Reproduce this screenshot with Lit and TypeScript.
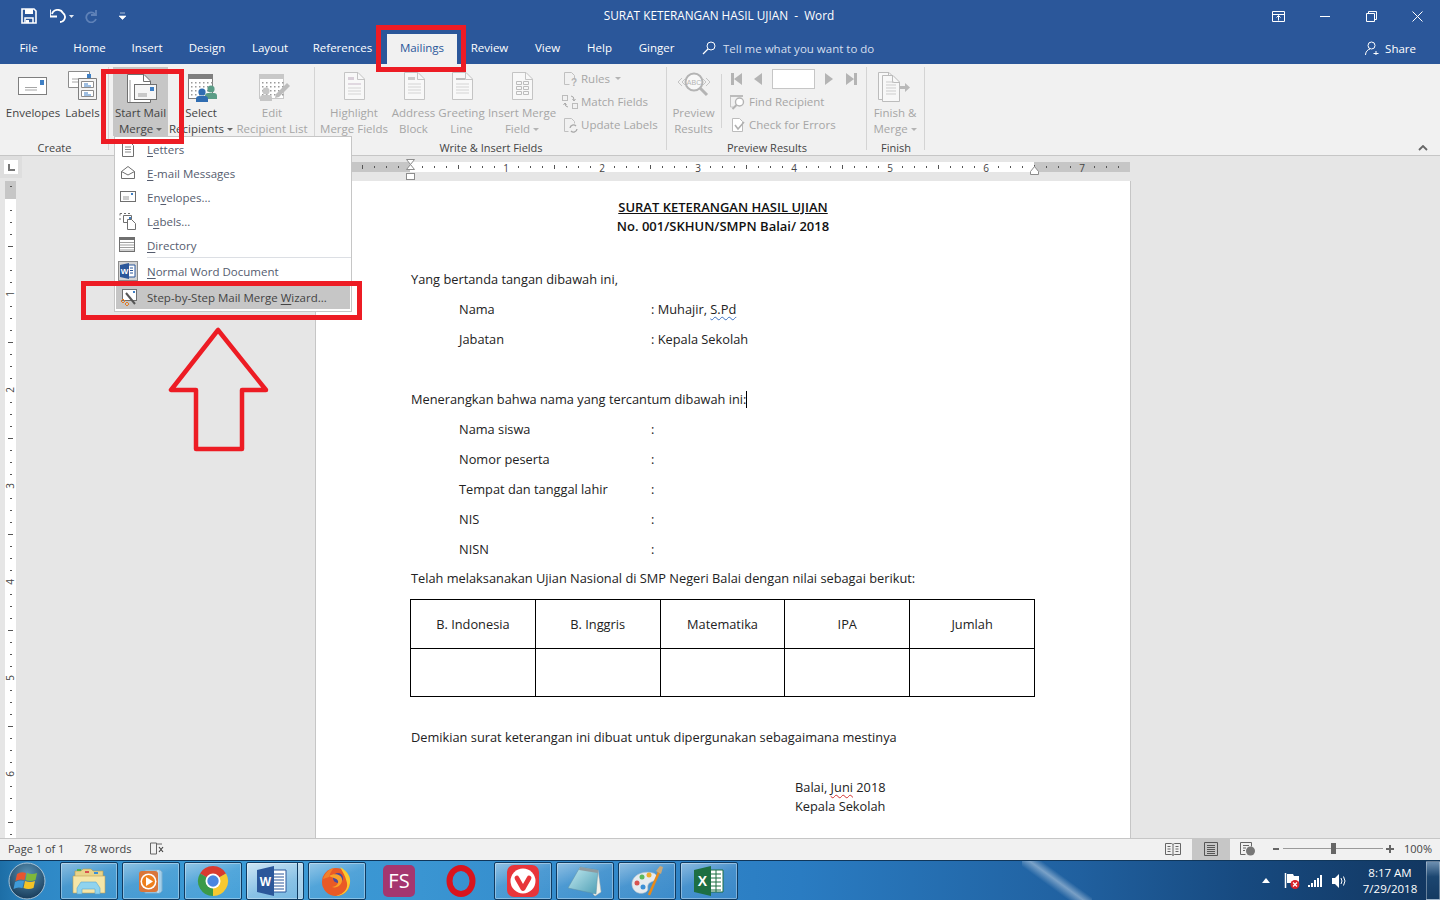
import { LitElement, html, css, svg } from 'lit';
import { customElement } from 'lit/decorators.js';

const range = (n: number) => Array.from({ length: n }, (_, i) => i);

// ---- ribbon icons (40x37 box, centred on the button column) ----
const G = '#c4c4c4';
const docSheet = (x: number, y: number, w: number, h: number, c = G, fill = '#f8f8f8') => svg`
  <path d="M${x + .5} ${y + .5}H${x + w - 7}L${x + w - .5} ${y + 7}V${y + h - .5}H${x + .5}Z" fill=${fill} stroke=${c}/>
  <path d="M${x + w - 7.5} ${y + 1}V${y + 7.5}H${x + w}" fill="none" stroke=${c}/>`;
const icon = (body: unknown) => html`<svg width="40" height="37" viewBox="0 0 40 37">${body}</svg>`;
const mini = (body: unknown) => html`<svg width="18" height="18" viewBox="0 0 18 18">${body}</svg>`;

const envelopeIcon = icon(svg`
  <rect x="5.5" y="10.5" width="28" height="17" fill="#fff" stroke="#7f7f7f"/>
  <rect x="27" y="13" width="4" height="5" fill="#3f7fc4"/>
  <path d="M12 20.5h12M12 23h12" stroke="#a6a6a6"/>`);
const labelsIcon = icon(svg`
  <path d="M5.5 4.5h21v16h-21z" fill="#fff" stroke="#8c8c8c"/>
  <rect x="24" y="7" width="4" height="5" fill="#3f7fc4"/>
  <path d="M9 12h10M9 15h10" stroke="#a6a6a6"/>
  <path d="M15.5 11.5h18v21h-18z" fill="#f4f4f4" stroke="#7f7f7f"/>
  <path d="M18.500 14.500h12v6h-12zM18.500 23.500h12v6h-12z" fill="#fff" stroke="#8c8c8c"/>
  <path d="M21 17h4M21 19h7M21 26h4M21 28h7" stroke="#3f7fc4"/>`);
const mergeIcon = icon(svg`
  ${docSheet(6, 7, 24, 29, '#707070', '#fff')}
  <path d="M9 13v22" stroke="#9b9b9b"/>
  <rect x="13.500" y="17.500" width="22" height="15" fill="#f6f6f6" stroke="#707070"/>
  <rect x="29" y="20" width="4" height="4" fill="#3f7fc4"/>
  <path d="M17 27h9M17 29h9" stroke="#9b9b9b"/>`);
const calendar = (c: string) => svg`
  <rect x="7.500" y="7.500" width="24" height="24" fill="#fff" stroke=${c}/>
  <rect x="7" y="7" width="25" height="5" fill=${c}/>
  ${range(4).map(r => range(6).map(k => svg`<rect x=${10 + k * 4} y=${15 + r * 4} width="1.500" height="1.500" fill="#999"/>`))}`;
const person = (x: number, y: number, c: string) => svg`
  <circle cx=${x} cy=${y} r="3.600" fill=${c}/>
  <path d="M${x - 6} ${y + 10}v-3q0-3 3-3h6q3 0 3 3v3z" fill=${c}/>`;
const selectIcon = icon(svg`${calendar('#7f7f7f')}${person(30, 22, '#5a9c86')}${person(21, 25, '#2f6db2')}`);
const editIcon = icon(svg`
  ${calendar('#c8c8c8')}${person(14, 24, '#c6c6c6')}
  <path d="M24 27l11-11 3 3-11 11-4 1z" fill="#bcbcbc"/>`);
const highlightIcon = icon(svg`
  ${docSheet(10, 5, 21, 28)}
  <rect x="14" y="10" width="6" height="3" fill="#d9cfd9"/><rect x="14" y="16" width="13" height="2" fill="#e0d8e0"/>
  <path d="M14 21h13M14 24h13M14 27h13" stroke="#d4d4d4"/>`);
const addressIcon = icon(svg`
  ${docSheet(10, 5, 21, 28)}
  <rect x="14" y="10" width="7" height="3" fill="#cbcbcb"/>
  <path d="M14 17h13M14 20h13M14 23h13M14 26h13" stroke="#d4d4d4"/>`);
const greetingIcon = icon(svg`
  ${docSheet(10, 5, 21, 28)}
  <rect x="14" y="11" width="9" height="2" fill="#bdbdbd"/>
  <path d="M14 17h13M14 20h13M14 23h13M14 26h13" stroke="#d4d4d4"/>`);
const insertIcon = icon(svg`
  ${docSheet(10, 5, 21, 28)}
  <path d="M14.500 14.500h5v3h-5zM21.500 14.500h5v3h-5zM14.500 19.500h5v3h-5zM21.500 19.500h5v3h-5zM14.500 24.500h5v3h-5zM21.500 24.500h5v3h-5z" fill="none" stroke="#bdbdbd"/>`);
const previewIcon = icon(svg`
  <circle cx="20" cy="15" r="8.500" fill="#f8f8f8" stroke="#b4b4b4" stroke-width="2"/>
  <path d="M26 21l7 7" stroke="#b4b4b4" stroke-width="3"/>
  <path d="M8 11l-4 4 4 4M12 11l-4 4 4 4M32 11l4 4-4 4M28 11l4 4-4 4" fill="none" stroke="#c4c4c4"/>
  <text x="20" y="18" text-anchor="middle" font-size="7" fill="#b4b4b4" font-family="Liberation Sans">ABC</text>`);
const finishIcon = icon(svg`
  ${docSheet(3, 5, 18, 28, '#bcbcbc')}
  ${docSheet(7, 8, 18, 27, '#bcbcbc')}
  <path d="M11 15h8M11 18h10M11 21h10M11 24h10M11 27h10" stroke="#cdcdcd"/>
  <path d="M25 19h5v-3l5 4.500-5 4.500v-3h-5z" fill="#b9b9b9"/>`);

// ---- small ribbon icons ----
const rulesIcon = mini(svg`
  <path d="M3.500 2.500h7l3 3v4M3.500 2.500v12h5" fill="none" stroke="#c0c0c0"/>
  <text x="10" y="16" font-size="10" font-weight="700" fill="#b4b4b4" font-family="Liberation Sans">?</text>`);
const matchIcon = mini(svg`
  <rect x="1.500" y="2.500" width="5" height="5" fill="none" stroke="#bcbcbc"/><rect x="11.500" y="10.500" width="5" height="5" fill="none" stroke="#bcbcbc"/>
  <path d="M10 3q3 0 3 4M11.500 6l1.500 2 1.500-2M7 14q-3 0-3-4M2.500 12l1.500-2 1.500 2" fill="none" stroke="#a8a8a8"/>`);
const updateIcon = mini(svg`
  <path d="M3.500 2.500h7l3 3v2M3.500 2.500v13h4" fill="none" stroke="#c0c0c0"/>
  <path d="M9 12a3.500 3.500 0 0 1 6-2M16 13a3.500 3.500 0 0 1-6 2" fill="none" stroke="#a8a8a8" stroke-width="1.300"/>`);
const findIcon = mini(svg`
  <rect x="1" y="2" width="13" height="2" fill="#bcbcbc"/><path d="M1.500 4v10h3" fill="none" stroke="#c4c4c4"/>
  <circle cx="10.500" cy="9" r="4" fill="#fff" stroke="#b4b4b4" stroke-width="1.400"/><path d="M7.500 12l-4 4" stroke="#b4b4b4" stroke-width="2"/>`);
const checkIcon = mini(svg`
  <path d="M3.500 2.500h7l3 3v10h-10z" fill="#fff" stroke="#bcbcbc"/>
  <path d="M6 9l3 4 6-7" fill="none" stroke="#b0b0b0" stroke-width="1.600"/>`);

// ---- mail merge menu icons ----
const mLetters = mini(svg`
  <path d="M3.500 1.500h7l4 4v11h-11z" fill="#fff" stroke="#6f6f6f"/>
  <path d="M6 7h6M6 9.500h6M6 12h6" stroke="#8c8c8c"/>`);
const mEmail = mini(svg`
  <path d="M2.500 7.500L9 2.500l6.500 5v7h-13z" fill="#fff" stroke="#6f6f6f"/>
  <path d="M2.500 7.500L9 11l6.500-3.500" fill="none" stroke="#6f6f6f"/>`);
const mEnv = mini(svg`
  <rect x="1.500" y="3.500" width="15" height="10" fill="#fff" stroke="#6f6f6f"/>
  <rect x="12" y="5" width="2" height="2" fill="#3f7fc4"/><path d="M4 9h6M4 11h6" stroke="#9a9a9a"/>`);
const mLabels = mini(svg`
  <path d="M1 1.500h2M5 1.500h2M9 1.500h2M1 1.500v2M1 6v2" stroke="#6f6f6f"/>
  <path d="M4.500 3.500h8v7h-8z" fill="#fff" stroke="#6f6f6f"/><rect x="10" y="5" width="2" height="2" fill="#3f7fc4"/>
  <path d="M8.500 7.500h4l4 4v6h-8z" fill="#fff" stroke="#6f6f6f"/>`);
const mDir = mini(svg`
  <rect x=".5" y="1.500" width="15" height="14" fill="#fff" stroke="#6f6f6f"/><rect y="1" width="16" height="3" fill="#6f6f6f"/>
  <path d="M1 6.500h14M1 9h14M1 11.500h14M1 14h14" stroke="#a0a0a0"/>`);
const mWord = html`<svg width="20" height="20" viewBox="0 0 20 20">
  <rect x=".5" y=".5" width="19" height="19" fill="#d4d4d4" stroke="#8c8c8c"/>
  <path d="M10 4h7v12h-7z" fill="#fff" stroke="#2b579a"/>
  <path d="M12 7h3M12 9.500h3M12 12h3" stroke="#2b579a"/>
  <path d="M2 4l9-2v16l-9-2z" fill="#2b579a"/>
  <text x="6.500" y="13" text-anchor="middle" font-size="8" font-weight="700" fill="#fff" font-family="Liberation Sans">W</text></svg>`;
const mWizard = mini(svg`
  <rect x="2.500" y="1.500" width="14" height="11" fill="#fff" stroke="#6f6f6f"/>
  <path d="M6 5l9 11" stroke="#555" stroke-width="2"/>
  <rect x="13" y="3" width="2" height="2" fill="#3f7fc4"/>
  <path d="M1 13l2-2 2 2-2 2zM5 16l2-2 2 2-2 2z" fill="none" stroke="#e07b28"/>`);

// ---- taskbar icons ----
const tbFolder = html`<svg width="34" height="30" viewBox="0 0 34 30">
  <path d="M3 5h6l2-2h8l2 2h10v6H3z" fill="#e8d48a" stroke="#b89a4a" stroke-width=".6"/>
  <rect x="5" y="3" width="4" height="2" fill="#4caf50"/><rect x="13" y="5" width="4" height="2" fill="#d9534f"/><rect x="22" y="6" width="4" height="2" fill="#3b8fd6"/>
  <path d="M1 10h32v17H1z" fill="#f5e6a8" stroke="#c0a256" stroke-width=".6"/>
  <path d="M5 28v-6l4-6h15l4 6v6h-5v-5H10v5z" fill="#8fd3ef" stroke="#5aa6cc" stroke-width=".6"/></svg>`;
const tbMedia = html`<svg width="30" height="30" viewBox="0 0 30 30">
  <path d="M9 4h15l2 2v19l-2 2H9z" fill="#a6cfe8" stroke="#7fb0d0"/><path d="M22 4v23" stroke="#d9edf7"/>
  <rect x="3" y="5" width="19" height="21" rx="3" fill="#d9763a"/>
  <circle cx="12.500" cy="15.500" r="8" fill="#fff"/><circle cx="12.500" cy="15.500" r="6.500" fill="#ee7f1c"/>
  <path d="M10 11l7 4.500-7 4.500z" fill="#fff"/></svg>`;
const tbChrome = html`<svg width="32" height="32" viewBox="0 0 32 32">
  <path d="M16 16L3 8.500A15 15 0 0 1 29 8.500Z" fill="#d93a2f"/>
  <path d="M16 16L29 8.500A15 15 0 0 1 16 31Z" fill="#f7c930"/>
  <path d="M16 16L16 31A15 15 0 0 1 3 8.500Z" fill="#3b9a48"/>
  <circle cx="16" cy="16" r="7.500" fill="#fff"/><circle cx="16" cy="16" r="5.700" fill="#4a85e0"/></svg>`;
const tbWord = html`<svg width="32" height="32" viewBox="0 0 32 32">
  <path d="M15 5h15v22H15z" fill="#fff" stroke="#2b579a"/>
  <path d="M18 9h10M18 12h10M18 15h10M18 18h10M18 21h10M18 24h10" stroke="#2b579a"/>
  <path d="M1 5l17-4v30L1 27z" fill="#2b579a"/>
  <text x="9.500" y="20.500" text-anchor="middle" font-size="12" font-weight="700" fill="#fff" font-family="Liberation Sans">W</text></svg>`;
const tbFirefox = html`<svg width="32" height="32" viewBox="0 0 32 32">
  <circle cx="15" cy="17" r="14" fill="#ea5a26"/>
  <path d="M19 2c7 4 11 9 10 16-1 8-7 13-14 13 8-2 12-7 11-13-1-5-3-9-7-16z" fill="#fbc92f"/>
  <circle cx="17" cy="13" r="5" fill="#4b4a9e"/>
  <path d="M8 11c5-3 12-2 13 3s-5 10-10 8c3 0 7-3 6-6s-5-3-9-5z" fill="#f9a12a"/>
  <path d="M2 14c2-6 6-10 11-11-3 3-4 6-5 9z" fill="#f1812b"/></svg>`;
const tbOpera = html`<svg width="32" height="32" viewBox="0 0 32 32">
  <ellipse cx="16" cy="16" rx="11.500" ry="13" fill="none" stroke="#d9141e" stroke-width="6"/></svg>`;
const tbVivaldi = html`<svg width="32" height="32" viewBox="0 0 32 32">
  <rect width="32" height="32" rx="7" fill="#e8353a"/><circle cx="16" cy="16" r="12.500" fill="#fff"/>
  <path d="M8 11.500q2.500-2 4 .5l4 7 4-7q1.500-2.500 4-.5 1 1 0 3l-6 10.500q-2 2-4 0L8 14.500q-1-2 0-3z" fill="#e8353a"/></svg>`;
const tbNotepad = html`<svg width="36" height="32" viewBox="0 0 36 32">
  <defs><linearGradient id="np" x1="0" y1="0" x2="1" y2="1"><stop offset="0" stop-color="#c6ecf2"/><stop offset="1" stop-color="#4f9fb5"/></linearGradient></defs>
  <path d="M31 5l3 22-6 4-2-2z" fill="#f2f2ea" stroke="#b8b8b0" stroke-width=".5"/>
  <path d="M13 2L31 5 29 29 1 23z" fill="url(#np)" stroke="#5d8fa5" stroke-width=".5"/>
  <path d="M13 2L31 5l-.3 3L12 5z" fill="#8f9a9f"/></svg>`;
const tbPaint = html`<svg width="36" height="32" viewBox="0 0 36 32">
  <path d="M3 20C2 11 13 5 24 8c4 1 5 5 2 7-3 2-6 2-7 5s1 5-2 7C12 30 4 28 3 20z" fill="#e6ebef" stroke="#b8c4cc" stroke-width=".6"/>
  <circle cx="8" cy="18" r="2.500" fill="#d9534f"/><circle cx="13" cy="12" r="2.500" fill="#5cb85c"/><circle cx="20" cy="10" r="2.500" fill="#f0ad2e"/><circle cx="14" cy="22" r="2.500" fill="#3b8fd6"/>
  <path d="M30 7L20 30" stroke="#e88a1a" stroke-width="2.500"/>
  <path d="M27 6l4-5 3 1-2 7z" fill="#c9a878"/></svg>`;
const tbExcel = html`<svg width="32" height="32" viewBox="0 0 32 32">
  <path d="M15 5h15v22H15z" fill="#fff" stroke="#1d6f42"/>
  <path d="M18 9h10M18 13h10M18 17h10M18 21h10M18 25h10M23 5v22" stroke="#1d6f42"/>
  <path d="M1 5l17-4v30L1 27z" fill="#1d6f42"/>
  <text x="9.500" y="21" text-anchor="middle" font-size="14" font-weight="700" fill="#fff" font-family="Liberation Sans">X</text></svg>`;

interface Big { w: number; l1: string; l2?: string; caret?: boolean; icon: unknown; off?: boolean; on?: boolean }

const groups: { w: number; pad: number; label: string; big: Big[] }[] = [
  { w: 109, pad: 1, label: 'Create', big: [
    { w: 64, l1: 'Envelopes', icon: envelopeIcon },
    { w: 35, l1: 'Labels', icon: labelsIcon },
  ] },
  { w: 206, pad: 4, label: '', big: [
    { w: 55, l1: 'Start Mail', l2: 'Merge', caret: true, icon: mergeIcon, on: true },
    { w: 66, l1: 'Select', l2: 'Recipients', caret: true, icon: selectIcon },
    { w: 76, l1: 'Edit', l2: 'Recipient List', icon: editIcon, off: true },
  ] },
];

const tabs = [
  ['File', 57], ['Home', 65], ['Insert', 50], ['Design', 70], ['Layout', 56], ['References', 89],
  ['Mailings', 70], ['Review', 65], ['View', 51], ['Help', 53], ['Ginger', 61],
] as [string, number][];

const infoRows1 = [['Nama', ': Muhajir, '], ['Jabatan', ': Kepala Sekolah']];
const infoRows2 = ['Nama siswa', 'Nomor peserta', 'Tempat dan tanggal lahir', 'NIS', 'NISN'];
const subjects = ['B. Indonesia', 'B. Inggris', 'Matematika', 'IPA', 'Jumlah'];

@customElement('app-root')
export class AppRoot extends LitElement {
  static styles = css`
    :host { display: block; width: 1440px; height: 900px; overflow: hidden; position: relative;
      font-family: 'Open Sans', sans-serif; color: #444; }
    svg { display: block; flex: none; }
    .app { display: flex; flex-direction: column; height: 900px; }

    .titlebar { height: 32px; background: #2b579a; display: flex; align-items: center; color: #fff; position: relative; }
    .qat { display: flex; align-items: center; padding-left: 21px; }
    .title { position: absolute; left: 0; right: 2px; top: 0; line-height: 31px; text-align: center; font-size: 11.800px; white-space: pre; }
    .winbtns { margin-left: auto; display: flex; align-items: center; padding-right: 17px; gap: 35px; }

    .tabs { height: 32px; background: #2b579a; display: flex; align-items: flex-end; color: #fff; font-size: 11.5px; }
    .tab { height: 30px; line-height: 28px; text-align: center; flex: none; }
    .tab.active { background: #f1f1f1; color: #2b579a; }
    .tell { display: flex; align-items: center; gap: 7px; height: 30px; padding-bottom: 2px; box-sizing: border-box; margin-left: 15px; color: #d5dfee; }
    .share { margin-left: auto; display: flex; align-items: center; gap: 6px; height: 30px; padding-bottom: 2px; box-sizing: border-box; padding-right: 24px; }

    .ribbon { height: 91px; background: #f1f1f1; border-bottom: 1px solid #c6c6c6; display: flex; position: relative; font-size: 11.5px; flex: none; box-sizing: content-box; }
    .group { display: flex; flex-direction: column; flex: none; box-sizing: border-box; }
    .group.sep { position: relative; }
    .group.sep::after { content: ''; position: absolute; right: 0; top: 3px; bottom: 5px; width: 1px; background: #d4d4d4; }
    .gbody { height: 72px; padding-top: 3px; display: flex; box-sizing: border-box; }
    .glabel { height: 16px; line-height: 18px; text-align: center; font-size: 11px; color: #444; margin-top: 3px; }
    .big { height: 69px; flex: none; display: flex; flex-direction: column; align-items: center; white-space: nowrap; }
    .big.on { background: #c6c6c6; }
    .big.off { color: #a6a6a6; }
    .big .line { height: 16px; line-height: 16px; }
    .big svg { margin-bottom: 1px; }
    .caret { display: inline-block; width: 0; height: 0; border: 3px solid transparent; border-top: 3px solid #666; border-bottom: 0; vertical-align: 2px; margin-left: 3px; }
    .off .caret, .small .caret { border-top-color: #b4b4b4; }
    .smalls { display: flex; flex-direction: column; flex: none; }
    .small { height: 23px; display: flex; align-items: center; gap: 2px; color: #a6a6a6; white-space: nowrap; }
    .vsep { width: 1px; background: #d4d4d4; height: 54px; margin: 7px 7px 0 6px; flex: none; }
    .nav { display: flex; align-items: center; height: 23px; }
    .navbox { width: 41px; height: 18px; background: #fff; border: 1px solid #c6c6c6; margin: 0 9px; box-sizing: content-box; }
    .collapse { position: absolute; right: 12px; bottom: 4px; }

    .work { flex: 1; min-height: 0; display: flex; background: #e6e6e6; overflow: hidden; }
    .side { width: 316px; flex: none; position: relative; }
    .corner { position: absolute; left: 0; top: 0; width: 22px; height: 22px; background: #dedede; }
    .cornerbox { margin: 4px; width: 14px; height: 14px; background: #fff; display: flex; align-items: center; justify-content: center; }
    .vruler { position: absolute; left: 0; top: 25px; }
    .pagecol { width: 814px; flex: none; display: flex; flex-direction: column; }
    .hruler { height: 25px; flex: none; }
    .page { flex: 1; min-height: 0; background: #fff; box-shadow: -1px 0 0 #c6c6c6, 1px 0 0 #c6c6c6; padding: 17px 95px 0; box-sizing: border-box;
      font-size: 12.800px; color: #222; overflow: hidden; }
    .head { text-align: center; font-weight: 600; height: 18.500px; line-height: 18.500px; font-size: 13px; color: #111; }
    .head.u { text-decoration: underline; }
    .line30 { height: 30px; line-height: 30px; white-space: nowrap; }
    .yang { margin-top: 29px; }
    .blank { height: 30px; }
    .info { display: grid; grid-template-columns: 192px 1fr; padding-left: 48px; }
    .squig { text-decoration: underline wavy #3a6fc0 1px; text-underline-offset: 2px; }
    .squigr { text-decoration: underline wavy #d03030 1px; text-underline-offset: 2px; }
    .cursor { display: inline-block; width: 1px; height: 17px; background: #000; vertical-align: -4px; }
    .tight { margin-top: -1px; }
    table { border-collapse: collapse; table-layout: fixed; width: 625px; margin: 6px 0 0 -1px; }
    td { border: 1px solid #000; height: 47.500px; padding: 0; text-align: center; font-size: 12.800px; }
    .closing { margin-top: 25px; }
    .sign { margin-top: 26px; padding-left: 384px; }
    .sign div { height: 19px; line-height: 19px; }

    .status { height: 22px; padding-bottom: 2px; background: #f1f1f1; border-top: 1px solid #c6c6c6; display: flex; align-items: center; font-size: 11px; color: #444; flex: none; box-sizing: border-box; }
    .st { white-space: nowrap; }
    .stright { margin-left: auto; display: flex; align-items: center; height: 19px; }
    .viewbtn { width: 38px; height: 21px; margin-bottom: -2px; padding-bottom: 2px; box-sizing: border-box; display: flex; align-items: center; justify-content: center; }
    .viewbtn.on { background: #c6c6c6; }
    .slider { width: 100px; height: 1px; background: #9a9a9a; position: relative; margin-left: 4px; }
    .thumb { position: absolute; left: 48px; top: -5px; width: 5px; height: 11px; background: #666; }

    .taskbar { height: 40px; flex: none; display: flex; align-items: center; position: relative; color: #fff;
      border-top: 1px solid #10365a; box-sizing: border-box;
      background:
        linear-gradient(36deg, transparent 38%, rgba(255,255,255,.4) 50%, transparent 60%) 1022px 0 / 70px 40px no-repeat,
        linear-gradient(to right, #1d6ea6 0, #2e88c6 40px, #3b9bd6 220px, #3a95d2 420px, #2a7cc2 800px, #20609f 1080px, #174a80 1240px, #12365f 1440px); }
    .orb { width: 60px; flex: none; display: flex; justify-content: center; padding-right: 6px; box-sizing: border-box; }
    .apps { display: flex; gap: 4px; }
    .app-btn { width: 58px; height: 38px; box-sizing: border-box; display: flex; align-items: center; justify-content: center; border-radius: 2px; }
    .app-btn.framed { border: 1px solid #0f3a60; box-shadow: inset 0 0 0 1px rgba(255,255,255,.35); background: linear-gradient(160deg, rgba(255,255,255,.45), rgba(255,255,255,.12) 45%, rgba(255,255,255,.06)); }
    .app-btn.active { background: linear-gradient(160deg, rgba(255,255,255,.75), rgba(255,255,255,.4) 60%, rgba(255,255,255,.3)); justify-content: flex-start; padding-left: 9px; position: relative; }
    .stack { position: absolute; right: 1px; top: 0; bottom: 0; width: 4px; border-left: 1px solid #0f3a60; background: rgba(255,255,255,.3); }
    .tray { margin-left: auto; display: flex; align-items: center; height: 100%; }
    .clock { width: 72px; margin-left: 7px; text-align: center; font-size: 11.500px; line-height: 16px; }
    .desk { width: 14px; height: 39px; border: 1px solid rgba(255,255,255,.35); box-sizing: border-box; background: linear-gradient(#6d8fb0, #1c4670 40%, #143a62); }

    .menu { position: absolute; left: 114px; top: 136px; width: 238px; height: 176px; background: #fff; border: 1px solid #c6c6c6; box-sizing: border-box; font-size: 11.500px; color: #555c6e; }
    .mi { height: 24px; display: flex; align-items: center; white-space: nowrap; }
    .mi .ic { width: 32px; flex: none; display: flex; justify-content: center; padding-right: 6px; box-sizing: border-box; }
    .mi u { text-underline-offset: 2px; }
    .msep { height: 1px; background: #dcdfe4; margin: 0 0 1px 32px; }
    .mi.tall { height: 26px; padding-bottom: 2px; box-sizing: border-box; }
    .mi.hl { background: #c6c6c6; color: #444; height: 24px; margin: 0 1px; }
    .mi.hl .ic { width: 31px; }

    .mark { position: absolute; border: 5px solid #ed1c24; box-sizing: border-box; pointer-events: none; }
    .m1 { left: 376px; top: 25px; width: 90px; height: 47px; }
    .m2 { left: 101px; top: 69px; width: 83px; height: 75px; }
    .m3 { left: 81px; top: 281px; width: 281px; height: 39px; }
    .arrow { position: absolute; left: 160px; top: 320px; }
  `;

  private renderBig(b: Big) {
    const cls = `big${b.on ? ' on' : ''}${b.off ? ' off' : ''}`;
    return html`<div class=${cls} style="width:${b.w}px">
      ${b.icon}
      <div class="line">${b.l1}</div>
      <div class="line">${b.l2 ?? ''}${b.caret ? html`<span class="caret"></span>` : ''}</div>
    </div>`;
  }

  private renderHRuler() {
    const ticks = range(68).map(i => 94 - 84 + i * 12);
    return html`<svg width="814" height="25" viewBox="0 0 814 25">
      <rect x="0" y="6" width="94" height="10" fill="#c6c6c6"/>
      <rect x="94" y="6" width="624" height="10" fill="#fff"/>
      <rect x="718" y="6" width="96" height="10" fill="#c6c6c6"/>
      ${ticks.map(x => {
        const k = (x - 94 + 960) / 12;
        if (k % 8 === 0) return '';
        const long = k % 4 === 0;
        return svg`<rect x=${x} y=${long ? 9 : 10} width="1" height=${long ? 4 : 2} fill="#555"/>`;
      })}
      ${range(7).map(i => svg`<text x=${94 + 96 * (i + 1)} y="15.500" text-anchor="middle" font-size="10" fill="#444" font-family="Open Sans">${i + 1}</text>`)}
      <path d="M90.500 3.500h8l-4 5 4 5h-8l4-5z" fill="#fff" stroke="#8c8c8c"/>
      <rect x="90.500" y="17.500" width="8" height="6" fill="#fff" stroke="#8c8c8c"/>
      <path d="M714.500 18.500v-3l4-5 4 5v3z" fill="#fff" stroke="#8c8c8c"/>
    </svg>`;
  }

  private renderVRuler() {
    // origin of the scale is the page's top margin, 17px below the top of the page
    return html`<svg width="22" height="660" viewBox="0 0 22 660">
      <rect x="5" width="11" height="18" fill="#c6c6c6"/>
      <rect x="5" y="18" width="11" height="642" fill="#fff"/>
      <rect x="10" y="5" width="2" height="1" fill="#555"/>
      ${range(54).map(i => {
        if (i === 0 || i % 8 === 0) return '';
        const long = i % 4 === 0;
        return svg`<rect x=${long ? 8 : 10} y=${17 + i * 12} width=${long ? 5 : 2} height="1" fill="#555"/>`;
      })}
      ${range(6).map(i => svg`<text transform="translate(14 ${113 + 96 * i}) rotate(-90)" text-anchor="middle" font-size="10" fill="#444" font-family="Open Sans">${i + 1}</text>`)}
    </svg>`;
  }

  render() {
    return html`
      <div class="app">
        <div class="titlebar">
          <div class="qat">
            <svg width="16" height="16" viewBox="0 0 16 16"><path d="M1 1h12l2 2v12H1z" fill="none" stroke="#fff" stroke-width="1.600"/><path d="M4 1h8v5H4z" fill="#fff"/><path d="M4 15v-5h8v5" fill="none" stroke="#fff" stroke-width="1.500"/><rect x="5" y="12" width="3" height="3" fill="#fff"/></svg>
            <svg style="margin-left:13px" width="26" height="14" viewBox="0 0 26 14"><path d="M2 5a6 6 0 0 1 11-1 5 5 0 0 1-3 9" fill="none" stroke="#fff" stroke-width="1.800"/><path d="M0 .5v7h7" fill="none" stroke="#fff" stroke-width="1.800"/><path d="M19 6h5l-2.500 3z" fill="#e4eaf3"/></svg>
            <svg style="margin-left:8px" width="14" height="14" viewBox="0 0 14 14"><path d="M11 5a5 5 0 1 0 1 5" fill="none" stroke="#5f82b8" stroke-width="1.800"/><path d="M12 1v5H7" fill="none" stroke="#5f82b8" stroke-width="1.800"/></svg>
            <svg style="margin-left:21px" width="8" height="8" viewBox="0 0 8 8"><path d="M1 1h5M0 4h7l-3.500 3.500z" fill="#fff" stroke="#fff" stroke-width=".6"/></svg>
          </div>
          <div class="title">SURAT KETERANGAN HASIL UJIAN  -  Word</div>
          <div class="winbtns">
            <svg width="13" height="11" viewBox="0 0 13 11"><path d="M.5.500h12v10H.5zM.5 3.500h12M6.500 9.500v-5M4.500 6.500l2-2 2 2" fill="none" stroke="#fff"/></svg>
            <svg width="11" height="11" viewBox="0 0 11 11"><path d="M0 5.500h10" stroke="#fff"/></svg>
            <svg width="11" height="11" viewBox="0 0 11 11"><path d="M.5 2.500h8v8h-8zM2.500 2.500v-2h8v8h-2" fill="none" stroke="#fff"/></svg>
            <svg width="11" height="11" viewBox="0 0 11 11"><path d="M.5.500l10 10M10.500.500l-10 10" stroke="#fff"/></svg>
          </div>
        </div>

        <div class="tabs">
          ${tabs.map(([t, w]) => html`<div class="tab ${t === 'Mailings' ? 'active' : ''}" style="width:${w}px">${t}</div>`)}
          <div class="tell">
            <svg width="14" height="14" viewBox="0 0 14 14"><circle cx="9" cy="5" r="4" fill="none" stroke="#fff"/><path d="M6 8L1 13" stroke="#fff" stroke-width="1.300"/></svg>
            Tell me what you want to do
          </div>
          <div class="share">
            <svg width="14" height="14" viewBox="0 0 14 14"><circle cx="6.500" cy="4.500" r="3.500" fill="none" stroke="#fff"/><path d="M.5 14c0-3 2-5.500 4.500-6M8.500 12.500h5M11 10v5" fill="none" stroke="#fff"/></svg>
            Share
          </div>
        </div>

        <div class="ribbon">
          ${groups.map(g => html`
            <div class="group sep" style="width:${g.w}px">
              <div class="gbody" style="padding-left:${g.pad}px">${g.big.map(b => this.renderBig(b))}</div>
              <div class="glabel">${g.label}</div>
            </div>`)}

          <div class="group sep" style="width:352px">
            <div class="gbody">
              ${this.renderBig({ w: 78, l1: 'Highlight', l2: 'Merge Fields', icon: highlightIcon, off: true })}
              ${this.renderBig({ w: 41, l1: 'Address', l2: 'Block', icon: addressIcon, off: true })}
              ${this.renderBig({ w: 55, l1: 'Greeting', l2: 'Line', icon: greetingIcon, off: true })}
              ${this.renderBig({ w: 66, l1: 'Insert Merge', l2: 'Field', caret: true, icon: insertIcon, off: true })}
              <div class="smalls" style="margin-left:6px">
                <div class="small">${rulesIcon}Rules<span class="caret"></span></div>
                <div class="small">${matchIcon}Match Fields</div>
                <div class="small">${updateIcon}Update Labels</div>
              </div>
            </div>
            <div class="glabel">Write &amp; Insert Fields</div>
          </div>

          <div class="group sep" style="width:200px">
            <div class="gbody" style="padding-left:5px">
              ${this.renderBig({ w: 43, l1: 'Preview', l2: 'Results', icon: previewIcon, off: true })}
              <div class="vsep"></div>
              <div class="smalls">
                <div class="nav">
                  <svg width="14" height="14" viewBox="0 0 14 14"><path d="M2 1h3v12H2zM13 1v12L5 7z" fill="#b4b4b4"/></svg>
                  <svg style="margin-left:10px" width="10" height="14" viewBox="0 0 10 14"><path d="M9 1v12L1 7z" fill="#b4b4b4"/></svg>
                  <div class="navbox"></div>
                  <svg width="10" height="14" viewBox="0 0 10 14"><path d="M1 1v12l8-6z" fill="#b4b4b4"/></svg>
                  <svg style="margin-left:11px" width="14" height="14" viewBox="0 0 14 14"><path d="M9 1h3v12H9zM1 1v12l8-6z" fill="#b4b4b4"/></svg>
                </div>
                <div class="small">${findIcon}Find Recipient</div>
                <div class="small">${checkIcon}Check for Errors</div>
              </div>
            </div>
            <div class="glabel">Preview Results</div>
          </div>

          <div class="group sep" style="width:58px">
            <div class="gbody">
              ${this.renderBig({ w: 56, l1: 'Finish &', l2: 'Merge', caret: true, icon: finishIcon, off: true })}
            </div>
            <div class="glabel">Finish</div>
          </div>

          <svg class="collapse" width="10" height="6" viewBox="0 0 10 6"><path d="M1 5l4-4 4 4" fill="none" stroke="#666" stroke-width="1.800"/></svg>
        </div>

        <div class="work">
          <div class="side">
            <div class="corner"><div class="cornerbox"><svg width="7" height="7" viewBox="0 0 7 7"><path d="M0 0h2v5h5v2H0z" fill="#777"/></svg></div></div>
            <div class="vruler">${this.renderVRuler()}</div>
          </div>
          <div class="pagecol">
            <div class="hruler">${this.renderHRuler()}</div>
            <div class="page">
              <div class="head"><span class="head u">SURAT KETERANGAN HASIL UJIAN</span></div>
              <div class="head">No. 001/SKHUN/SMPN Balai/ 2018</div>
              <div class="line30 yang">Yang bertanda tangan dibawah ini,</div>
              ${infoRows1.map(([a, b], i) => html`
                <div class="line30 info"><span>${a}</span><span>${b}${i === 0 ? html`<span class="squig">S.Pd</span>` : ''}</span></div>`)}
              <div class="blank"></div>
              <div class="line30">Menerangkan bahwa nama yang tercantum dibawah ini:<span class="cursor"></span></div>
              ${infoRows2.map(r => html`<div class="line30 info"><span>${r}</span><span>:</span></div>`)}
              <div class="line30 tight">Telah melaksanakan Ujian Nasional di SMP Negeri Balai dengan nilai sebagai berikut:</div>
              <table>
                <tr>${subjects.map(s => html`<td>${s}</td>`)}</tr>
                <tr>${subjects.map(() => html`<td></td>`)}</tr>
              </table>
              <div class="line30 closing">Demikian surat keterangan ini dibuat untuk dipergunakan sebagaimana mestinya</div>
              <div class="sign">
                <div>Balai, <span class="squigr">Juni</span> 2018</div>
                <div>Kepala Sekolah</div>
              </div>
            </div>
          </div>
        </div>

        <div class="status">
          <span class="st" style="margin-left:8px">Page 1 of 1</span>
          <span class="st" style="margin-left:20px">78 words</span>
          <svg style="margin-left:18px" width="16" height="14" viewBox="0 0 16 14"><path d="M7.500 2v10L1.500 12V1h6zM7.500 2H13" fill="none" stroke="#666"/><path d="M10 5l4 5M14 5l-4 5" stroke="#444" stroke-width="1.200"/></svg>
          <div class="stright">
            <svg width="16" height="14" viewBox="0 0 16 14"><path d="M.5 1.500h6l1.500 1 1.500-1h6v11h-6L8 13.500l-1.500-1h-6zM8 3v10M2.500 4.500h3M2.500 7h3M2.500 9.500h3M10.500 4.500h3M10.500 7h3M10.500 9.500h3" fill="none" stroke="#666"/></svg>
            <div class="viewbtn on" style="margin-left:11px"><svg width="14" height="14" viewBox="0 0 14 14"><path d="M.5.500h13v13H.5zM3 3.500h8M3 5.500h8M3 7.500h8M3 9.500h8M3 11.500h8" fill="none" stroke="#555"/></svg></div>
            <svg style="margin-left:10px" width="16" height="14" viewBox="0 0 16 14"><path d="M.5.500h11v4M.5.500v12h5M3 3.500h6M3 6h3M3 8.500h2" fill="none" stroke="#666"/><circle cx="10.500" cy="9" r="4.500" fill="#777"/></svg>
            <svg style="margin-left:15px" width="8" height="8" viewBox="0 0 8 8"><rect x="2" y="3" width="6" height="2" fill="#666"/></svg>
            <div class="slider"><div class="thumb"></div></div>
            <svg style="margin-left:3px" width="8" height="8" viewBox="0 0 8 8"><path d="M0 3h3V0h2v3h3v2H5v3H3V5H0z" fill="#666"/></svg>
            <span class="st" style="margin:0 8px 0 10px">100%</span>
          </div>
        </div>

        <div class="taskbar">
          <div class="orb">
            <svg width="38" height="38" viewBox="0 0 38 38">
              <defs><radialGradient id="o" cx=".5" cy=".3" r=".8"><stop offset="0" stop-color="#5a93b5"/><stop offset="1" stop-color="#0e2f4d"/></radialGradient></defs>
              <circle cx="19" cy="19" r="18" fill="url(#o)" stroke="#a9c4d6"/>
              <path d="M9 12q4-3 9-1l-1.500 7q-5-1.500-9 1z" fill="#e8552d"/>
              <path d="M19 11q5 2 10 0l-1.500 7q-5 2-10 0z" fill="#7fb83a"/>
              <path d="M7 20q4-2.500 9-1l-1.500 7q-5-1.500-9 1z" fill="#3f9bd9"/>
              <path d="M17 19q5 2 10 0l-1.500 7q-5 2-10 0z" fill="#f3c326"/>
            </svg>
          </div>
          <div class="apps">
            <div class="app-btn framed">${tbFolder}</div>
            <div class="app-btn framed">${tbMedia}</div>
            <div class="app-btn framed">${tbChrome}</div>
            <div class="app-btn framed active">${tbWord}<div class="stack"></div></div>
            <div class="app-btn framed">${tbFirefox}</div>
            <div class="app-btn"><svg width="32" height="32" viewBox="0 0 32 32"><rect width="32" height="32" rx="5" fill="#a5366f"/><text x="16" y="23" text-anchor="middle" font-size="20" fill="#fff" font-family="Open Sans">FS</text></svg></div>
            <div class="app-btn">${tbOpera}</div>
            <div class="app-btn framed">${tbVivaldi}</div>
            <div class="app-btn framed">${tbNotepad}</div>
            <div class="app-btn framed">${tbPaint}</div>
            <div class="app-btn framed">${tbExcel}</div>
          </div>
          <div class="tray">
            <svg width="8" height="5" viewBox="0 0 8 5"><path d="M4 0l4 5H0z" fill="#fff"/></svg>
            <svg style="margin-left:14px" width="16" height="16" viewBox="0 0 16 16"><path d="M1.500 0v15" stroke="#fff" stroke-width="1.500"/><path d="M3 1h6l1 2h5v7H3z" fill="#fff"/><circle cx="11" cy="11.500" r="4.500" fill="#d8232a"/><path d="M9 9.500l4 4M13 9.500l-4 4" stroke="#fff" stroke-width="1.200"/></svg>
            <svg style="margin-left:7px" width="16" height="14" viewBox="0 0 16 14"><path d="M1 11h2v2H1zM4 9h2v4H4zM7 6h2v7H7zM10 4h2v9h-2zM13 1h2v12h-2z" fill="#fff"/></svg>
            <svg style="margin-left:9px" width="15" height="14" viewBox="0 0 15 14"><path d="M0 4h3l4-4v14l-4-4H0z" fill="#fff"/><path d="M9 4q2 3 0 6M11.500 2.500q3 4.500 0 9" fill="none" stroke="#fff"/></svg>
            <div class="clock"><div>8:17 AM</div><div>7/29/2018</div></div>
            <div class="desk"></div>
          </div>
        </div>
      </div>

      <div class="menu">
        <div class="mi"><span class="ic">${mLetters}</span><span><u>L</u>etters</span></div>
        <div class="mi"><span class="ic">${mEmail}</span><span><u>E</u>-mail Messages</span></div>
        <div class="mi"><span class="ic">${mEnv}</span><span>En<u>v</u>elopes...</span></div>
        <div class="mi"><span class="ic">${mLabels}</span><span>L<u>a</u>bels...</span></div>
        <div class="mi"><span class="ic">${mDir}</span><span><u>D</u>irectory</span></div>
        <div class="msep"></div>
        <div class="mi tall"><span class="ic">${mWord}</span><span><u>N</u>ormal Word Document</span></div>
        <div class="mi hl"><span class="ic">${mWizard}</span><span>Step-by-Step Mail Merge <u>W</u>izard...</span></div>
      </div>

      <div class="mark m1"></div>
      <div class="mark m2"></div>
      <div class="mark m3"></div>
      <svg class="arrow" width="116" height="136" viewBox="160 320 116 136">
        <path d="M218 330L171 390H196V449H242V390H266Z" fill="none" stroke="#ed1c24" stroke-width="4.500" stroke-linejoin="round"/>
      </svg>
    `;
  }
}
